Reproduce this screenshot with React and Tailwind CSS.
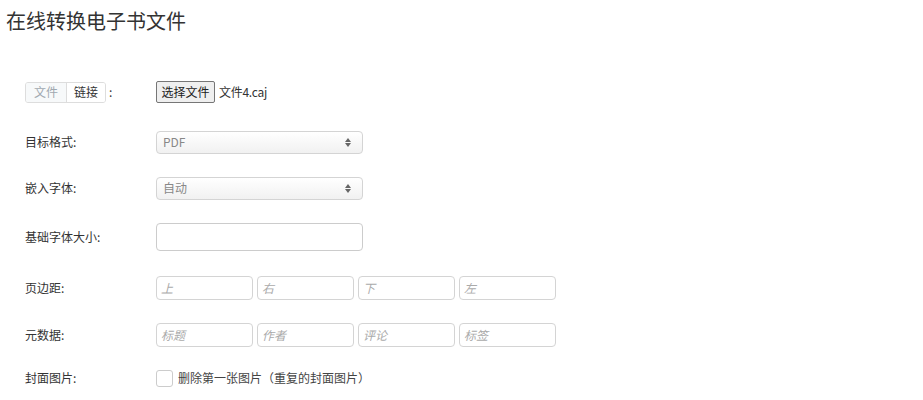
const font = { fontFamily: '"Noto Sans CJK SC", "Liberation Sans", sans-serif' };

const Label = ({ children }) => (
  <div className="w-[131px] shrink-0 text-[12px] text-[#333]">{children}</div>
);

const Row = ({ className = "", children }) => (
  <div className={`flex h-[28px] items-center ${className}`}>{children}</div>
);

const Select = ({ value }) => (
  <div className="flex h-[23px] w-[207px] items-center justify-between rounded-[4px] border border-[#d4d4d4] bg-gradient-to-b from-white to-[#f1f1f1] pl-[6px] pr-[11px] text-[12px] text-[#888]">
    <span>{value}</span>
    <span className="flex flex-col items-center leading-none">
      <svg width="6" height="4" viewBox="0 0 6 4"><path d="M3 0L6 4H0z" fill="#666" /></svg>
      <svg width="6" height="4" viewBox="0 0 6 4" className="mt-[1px]"><path d="M0 0h6L3 4z" fill="#666" /></svg>
    </span>
  </div>
);

const TextBox = ({ placeholder }) => (
  <div className="flex h-[24px] w-[97px] items-center rounded-[4px] border border-[#d4d4d4] px-[4px] text-[12px] italic text-[#aaa]">
    {placeholder}
  </div>
);

export default function App() {
  return (
    <div className="min-h-[400px] w-[923px] bg-white" style={font}>
      <div className="pl-[6px] pt-[7px] text-[20px] leading-[28px] text-[#333]">在线转换电子书文件</div>

      <div className="mt-[43px] pl-[25px]">
        <Row>
          <div className="w-[131px] shrink-0 flex items-center">
            <div className="flex h-[21px] overflow-hidden rounded-[3px] border border-[#ddd] text-[12px]">
              <span className="flex w-[40px] items-center justify-center bg-[#f7f9fa] text-[#a0a8b0]">文件</span>
              <span className="flex w-[39px] items-center justify-center border-l border-[#ddd] bg-white text-[#333]">链接</span>
            </div>
            <span className="ml-[3px] text-[12px] text-[#333]">:</span>
          </div>
          <div className="flex h-[22px] w-[59px] items-center justify-center rounded-[2px] border border-[#767676] bg-[#efefef] text-[12px] text-[#222]">
            选择文件
          </div>
          <span className="ml-[4px] text-[12px] tracking-[-0.3px] text-[#333]">文件4.caj</span>
        </Row>

        <Row className="mt-[22px]">
          <Label>目标格式:</Label>
          <Select value="PDF" />
        </Row>

        <Row className="mt-[18px]">
          <Label>嵌入字体:</Label>
          <Select value="自动" />
        </Row>

        <Row className="mt-[21px]">
          <Label>基础字体大小:</Label>
          <div className="h-[28px] w-[207px] rounded-[4px] border border-[#ccc]" />
        </Row>

        <Row className="mt-[23px]">
          <Label>页边距:</Label>
          <div className="flex gap-[4px]">
            <TextBox placeholder="上" />
            <TextBox placeholder="右" />
            <TextBox placeholder="下" />
            <TextBox placeholder="左" />
          </div>
        </Row>

        <Row className="mt-[19px]">
          <Label>元数据:</Label>
          <div className="flex gap-[4px]">
            <TextBox placeholder="标题" />
            <TextBox placeholder="作者" />
            <TextBox placeholder="评论" />
            <TextBox placeholder="标签" />
          </div>
        </Row>

        <Row className="mt-[15px]">
          <Label>封面图片:</Label>
          <div className="h-[17px] w-[17px] rounded-[3px] border border-[#ccc]" />
          <span className="ml-[5px] text-[12px] text-[#444]">删除第一张图片（重复的封面图片）</span>
        </Row>
      </div>
    </div>
  );
}
